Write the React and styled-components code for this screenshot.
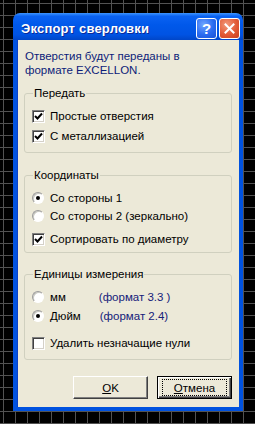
import React from 'react';
import styled, { createGlobalStyle } from 'styled-components';

const GlobalStyle = createGlobalStyle`
  html, body {
    margin: 0;
    padding: 0;
  }
  body {
    width: 255px;
    height: 424px;
    overflow: hidden;
    background-color: #000;
    background-image:
      linear-gradient(to right, #525252 1px, transparent 1px),
      linear-gradient(to bottom, #525252 1px, transparent 1px);
    background-size: 12px 12px;
    background-position: 3px 3px;
    font-family: "Liberation Sans", Arial, sans-serif;
    font-size: 11.5px;
  }
`;

const Window = styled.div`
  margin: 13px 0 0 13px;
  width: 230px;
  display: flex;
  flex-direction: column;
`;

const TitleBar = styled.div`
  height: 27px;
  border-radius: 7px 7px 0 0;
  background: linear-gradient(to bottom, #3d95ff 0%, #0a62f2 12%, #0058ea 45%, #0053e3 80%, #0046c8 100%);
  display: flex;
  align-items: center;
  padding: 3px 3px 0 8px;
  box-sizing: border-box;
`;

const Title = styled.div`
  color: #fff;
  font-family: "Liberation Sans", Arial, sans-serif;
  font-weight: bold;
  font-size: 13px;
  letter-spacing: 0.2px;
  text-shadow: 1px 1px 0 #0a2a9a;
`;

const Caption = styled.div`
  margin-left: auto;
  display: flex;
  gap: 2px;
`;

const CaptionButton = styled.div`
  width: 21px;
  height: 21px;
  box-sizing: border-box;
  border: 1px solid #fff;
  border-radius: 3px;
  display: flex;
  align-items: center;
  justify-content: center;
  background: ${p => p.$close
    ? 'radial-gradient(circle at 35% 30%, #f29a7c 0%, #e25a36 55%, #c8401e 100%)'
    : 'radial-gradient(circle at 35% 30%, #6fa4ff 0%, #2a6bf0 55%, #1a52d6 100%)'};
`;

const HelpMark = styled.span`
  color: #fff;
  font-weight: bold;
  font-size: 15px;
  line-height: 1;
  font-family: "Liberation Sans", Arial, sans-serif;
`;

const Client = styled.div`
  background: #ece9d8;
  border: 4px solid #0052df;
  border-top: none;
  box-shadow: inset 1px 0 0 #0a3fc6;
  padding: 9px 7px 8px 7px;
  display: flex;
  flex-direction: column;
`;

const Intro = styled.div`
  color: #0c1d78;
  line-height: 14px;
  padding-left: 1px;
  margin-bottom: 10px;
`;

const Group = styled.fieldset`
  margin: 0 0 ${p => p.$mb || 0}px 0;
  border: 1px solid #d0d0bf;
  border-radius: 3px;
  padding: ${p => p.$pt}px 6px ${p => p.$pb}px 7px;
  min-width: 0;
`;

const Legend = styled.legend`
  padding: 0 1px;
  margin-left: 1px;
  line-height: 13px;
  color: #000;
`;

const Row = styled.label`
  display: flex;
  align-items: center;
  height: ${p => p.$h || 20}px;
  margin-top: ${p => p.$mt || 0}px;
  color: #000;
  gap: 5px;
`;

const Box = styled.span`
  width: 13px;
  height: 13px;
  box-sizing: border-box;
  background: #fff;
  border-top: 1px solid #808080;
  border-left: 1px solid #808080;
  border-right: 1px solid #fff;
  border-bottom: 1px solid #fff;
  box-shadow: inset 1px 1px 0 #404040, inset -1px -1px 0 #d4d0c8;
  display: flex;
  align-items: center;
  justify-content: center;
  flex: none;
`;

const Radio = styled.span`
  width: 12px;
  height: 12px;
  box-sizing: border-box;
  border-radius: 50%;
  background: #fff;
  border: 1px solid;
  border-color: #9a9a9a #ffffff #ffffff #9a9a9a;
  box-shadow: inset 1px 1px 0 #c8c8c0;
  display: flex;
  align-items: center;
  justify-content: center;
  flex: none;
  margin-right: 1px;
`;

const Dot = styled.span`
  width: 4px;
  height: 4px;
  border-radius: 50%;
  background: #000;
`;

const Format = styled.span`
  color: #14207a;
  margin-left: ${p => p.$ml}px;
`;

const Buttons = styled.div`
  display: flex;
  justify-content: flex-end;
  gap: 9px;
  margin-top: 16px;
`;

const Button = styled.div`
  width: 75px;
  height: 23px;
  box-sizing: border-box;
  background: #ece9d8;
  color: #000;
  display: flex;
  align-items: center;
  justify-content: center;
  border-top: 1px solid #fff;
  border-left: 1px solid #fff;
  border-right: 1px solid #404040;
  border-bottom: 1px solid #404040;
  box-shadow: inset -1px -1px 0 #808080;
  ${p => p.$default && `
    border: 1px solid #000;
    box-shadow: inset 1px 1px 0 #fff, inset -1px -1px 0 #404040, inset -2px -2px 0 #808080;
  `}
`;

const Focus = styled.span`
  display: flex;
  align-items: center;
  justify-content: center;
  width: 63px;
  height: 15px;
  outline: 1px dotted #000;
`;

const U = styled.span`
  text-decoration: underline;
`;

const Check = () => (
  <svg width="9" height="9" viewBox="0 0 9 9">
    <path d="M1 4 L3.5 6.5 L8 1.5" fill="none" stroke="#000" strokeWidth="2" />
  </svg>
);

const CheckBox = ({ checked, children, ...rest }) => (
  <Row {...rest}>
    <Box>{checked && <Check />}</Box>
    <span>{children}</span>
  </Row>
);

const RadioRow = ({ checked, children, ...rest }) => (
  <Row {...rest}>
    <Radio>{checked && <Dot />}</Radio>
    {children}
  </Row>
);

export default function App() {
  return (
    <>
      <GlobalStyle />
      <Window>
        <TitleBar>
          <Title>Экспорт сверловки</Title>
          <Caption>
            <CaptionButton><HelpMark>?</HelpMark></CaptionButton>
            <CaptionButton $close>
              <svg width="11" height="11" viewBox="0 0 11 11">
                <path d="M1.5 1.5 L9.5 9.5 M9.5 1.5 L1.5 9.5" stroke="#fff" strokeWidth="2" strokeLinecap="square" />
              </svg>
            </CaptionButton>
          </Caption>
        </TitleBar>
        <Client>
          <Intro>
            Отверстия будут переданы в<br />
            формате EXCELLON.
          </Intro>

          <Group $pt={6} $pb={6} $mb={16}>
            <Legend>Передать</Legend>
            <CheckBox checked>Простые отверстия</CheckBox>
            <CheckBox checked>С металлизацией</CheckBox>
          </Group>

          <Group $pt={7} $pb={4} $mb={15}>
            <Legend>Координаты</Legend>
            <RadioRow checked $h={18}>Со стороны 1</RadioRow>
            <RadioRow $h={17}>Со стороны 2 (зеркально)</RadioRow>
            <CheckBox checked $h={18} $mt={6}>Сортировать по диаметру</CheckBox>
          </Group>

          <Group $pt={7} $pb={7}>
            <Legend>Единицы измерения</Legend>
            <RadioRow $h={18}>мм<Format $ml={28}>(формат 3.3 )</Format></RadioRow>
            <RadioRow checked $h={20}>Дюйм<Format $ml={14}>(формат 2.4)</Format></RadioRow>
            <CheckBox $h={18} $mt={8}>Удалить незначащие нули</CheckBox>
          </Group>

          <Buttons>
            <Button><span><U>O</U>K</span></Button>
            <Button $default><Focus><U>О</U>тмена</Focus></Button>
          </Buttons>
        </Client>
      </Window>
    </>
  );
}
